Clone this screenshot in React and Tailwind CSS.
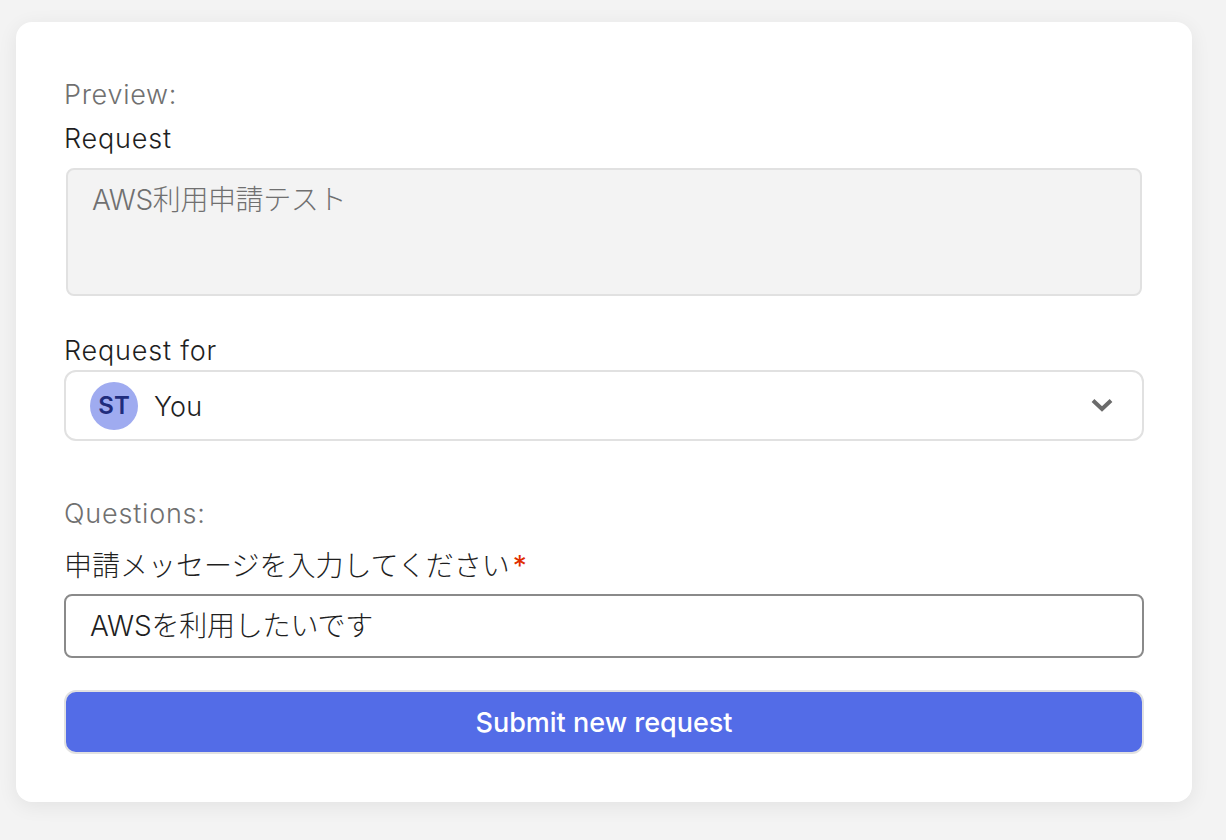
import React from "react";

const App = () => {
  return (
    <div className="min-h-screen h-[840px] bg-[#f3f3f3] pt-[22px] pl-4 overflow-hidden font-['Inter','Noto_Sans_CJK_JP',sans-serif]">
      <div className="w-[1176px] h-[780px] bg-white rounded-2xl shadow-[0_4px_20px_rgba(0,0,0,0.07)] px-12 pt-[51px] flex flex-col">
        <div className="h-[44px] leading-[44px] text-[27px] tracking-[0.7px] text-[#707070] font-light">Preview:</div>
        <div className="h-[44px] leading-[44px] text-[27px] tracking-[0.8px] text-[#1f1f1f] font-light">Request</div>
        <div className="mt-[7px] mx-[2px] h-[128px] rounded-lg border-2 border-[#e1e1e1] bg-[#f3f3f3] px-6 py-[10px] text-[28px] tracking-[-0.4px] leading-[40px] text-[#707070] font-light">
          AWS利用申請テスト
        </div>
        <div className="mt-[35px] h-[39px] leading-[39px] text-[27px] tracking-[0.8px] text-[#1f1f1f] font-light">Request for</div>
        <div className="h-[71px] rounded-[12px] border-2 border-[#e1e1e1] flex items-center pt-[1px] pl-6 pr-[28px]">
          <div className="w-12 h-12 rounded-full bg-[#9fabf0] flex items-center justify-center text-[24px] font-semibold text-[#1f2c7c]">ST</div>
          <div className="ml-4 mt-[2px] text-[27px] tracking-[0.2px] text-[#1f1f1f] font-light">You</div>
          <svg className="ml-auto -mt-[2px]" width="24" height="16" viewBox="0 0 24 16" fill="none">
            <path d="M3 3.5 L12 12 L21 3.5" stroke="#6b6b6b" strokeWidth="4" />
          </svg>
        </div>
        <div className="mt-[52px] h-[42px] leading-[42px] text-[27px] tracking-[0.8px] text-[#707070] font-light">Questions:</div>
        <div className="mt-[9px] h-[44px] leading-[44px] text-[28px] text-[#1f1f1f] font-light">
          申請メッセージを入力してください<span className="text-[#e02d00] ml-[3px] font-normal">*</span>
        </div>
        <div className="h-[64px] mt-[6px] rounded-lg border-2 border-[#8a8a8a] flex items-center pl-6 text-[28px] tracking-[-0.2px] text-[#1f1f1f] font-light">
          AWSを利用したいです
        </div>
        <div className="mt-[32px] h-[64px] rounded-[12px] border-2 border-[#e1e1e1] bg-[#536ce7] flex items-center justify-center pt-[3px] text-[27px] font-medium text-white">
          Submit new request
        </div>
      </div>
    </div>
  );
};

export default App;
